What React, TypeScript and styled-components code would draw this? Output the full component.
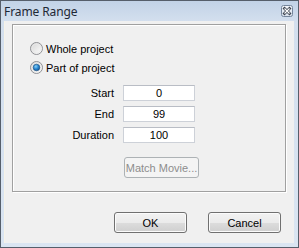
import React from 'react';
import styled, { createGlobalStyle } from 'styled-components';

const Global = createGlobalStyle`
  html, body { margin: 0; padding: 0; background: #ffffff; }
  body { font-family: "Liberation Sans", Arial, sans-serif; font-size: 11px; }
`;

const Window = styled.div`
  width: 299px;
  height: 248px;
  box-sizing: border-box;
  border: 1px solid #565f6b;
  background: linear-gradient(#c2d3e7 0px, #d3dfee 20px, #dae5f2 100%);
  display: flex;
  flex-direction: column;
`;

const TitleBar = styled.div`
  height: 20px;
  flex: none;
  display: flex;
  align-items: center;
  justify-content: space-between;
  padding: 0 5px 0 3px;
`;

const Title = styled.span`
  font-family: "Noto Sans", "Liberation Sans", sans-serif;
  font-size: 12px;
  color: #1e2835;
  letter-spacing: -0.1px;
`;

const Frame = styled.div`
  flex: 1;
  display: flex;
  padding: 0 4px 4px 4px;
`;

const Client = styled.div`
  flex: 1;
  background: #f0f0f0;
  display: flex;
  flex-direction: column;
  padding: 3px 0 10px 0;
  box-shadow: -1px 0 0 #f6f3e8;
`;

const GroupBox = styled.div`
  box-sizing: border-box;
  height: 168px;
  margin: 0 8px 0 7px;
  border: 1px solid #a0a0a0;
  box-shadow: inset 1px 1px 0 #ffffff, 1px 1px 0 #ffffff;
  padding: 17px 0 0 17px;
  display: flex;
  flex-direction: column;
`;

const RadioList = styled.div`
  display: flex;
  flex-direction: column;
  gap: 6px;
`;

const RadioRow = styled.label`
  display: flex;
  align-items: center;
  gap: 3px;
  height: 13px;
  color: #000;
  font-size: 11px;
`;

const Fields = styled.div`
  display: grid;
  grid-template-columns: 84px 72px;
  grid-auto-rows: 16px;
  column-gap: 9px;
  row-gap: 5px;
  margin-top: 11px;
  align-items: center;
`;

const FieldLabel = styled.span`
  text-align: right;
  color: #000;
  font-size: 11px;
`;

const FieldBox = styled.div`
  box-sizing: border-box;
  height: 16px;
  border: 1px solid #cdd1d8;
  border-top-color: #b9bdc5;
  background: #ffffff;
  display: flex;
  align-items: center;
  justify-content: center;
  font-size: 11px;
  color: #000;
`;

const PushButton = styled.div<{ $disabled?: boolean; $w: number }>`
  box-sizing: border-box;
  width: ${(p) => p.$w}px;
  height: 21px;
  border: 1px solid ${(p) => (p.$disabled ? '#adb2b5' : '#707070')};
  border-radius: 3px;
  background: ${(p) =>
    p.$disabled
      ? '#f4f4f4'
      : 'linear-gradient(#f2f2f2 0%, #ebebeb 50%, #dddddd 50%, #cfcfcf 100%)'};
  box-shadow: inset 0 0 0 1px ${(p) => (p.$disabled ? '#f4f4f4' : '#fbfbfb')};
  color: ${(p) => (p.$disabled ? '#8d8d8d' : '#000')};
  display: flex;
  align-items: center;
  justify-content: center;
  font-size: 11px;
`;

const MatchCell = styled.div`
  grid-column: 2;
  margin-top: 9px;
  margin-left: 1px;
  align-self: start;
`;

const ButtonRow = styled.div`
  margin-top: auto;
  display: flex;
  justify-content: flex-end;
  gap: 21px;
  padding-right: 13px;
`;

const CloseIcon = () => (
  <svg width="12" height="12" viewBox="0 0 12 12">
    <defs>
      <linearGradient id="cg" x1="0" y1="0" x2="0" y2="1">
        <stop offset="0" stopColor="#f4f7fb" />
        <stop offset="1" stopColor="#d6dfea" />
      </linearGradient>
    </defs>
    <rect x="0.5" y="0.5" width="11" height="11" rx="2" fill="url(#cg)" stroke="#75869c" />
    <path d="M3.5 3.5 L8.5 8.5 M8.5 3.5 L3.5 8.5" stroke="#3d4450" strokeWidth="2.8" strokeLinecap="square" />
    <path d="M3.5 3.5 L8.5 8.5 M8.5 3.5 L3.5 8.5" stroke="#ffffff" strokeWidth="1.1" />
  </svg>
);

const RadioIcon = ({ checked }: { checked?: boolean }) => (
  <svg width="13" height="13" viewBox="0 0 13 13">
    <defs>
      <linearGradient id="rf" x1="0" y1="0" x2="1" y2="1">
        <stop offset="0" stopColor="#d4d4d4" />
        <stop offset="1" stopColor="#ffffff" />
      </linearGradient>
      <radialGradient id="rd" cx="0.4" cy="0.35" r="0.7">
        <stop offset="0" stopColor="#8ad0f5" />
        <stop offset="0.5" stopColor="#2a8ad4" />
        <stop offset="1" stopColor="#0f4f8c" />
      </radialGradient>
    </defs>
    <circle cx="6.5" cy="6.5" r="6" fill="url(#rf)" stroke="#8f9094" />
    <circle cx="6.5" cy="6.5" r="4.6" fill="none" stroke="#e8e8e8" strokeWidth="0.8" />
    {checked && <circle cx="6.5" cy="6.5" r="3.3" fill="url(#rd)" stroke="#1b4f80" strokeWidth="0.6" />}
  </svg>
);

export default function App() {
  return (
    <>
      <Global />
      <Window>
        <TitleBar>
          <Title>Frame Range</Title>
          <CloseIcon />
        </TitleBar>
        <Frame>
          <Client>
            <GroupBox>
              <RadioList>
                <RadioRow>
                  <RadioIcon />
                  Whole project
                </RadioRow>
                <RadioRow>
                  <RadioIcon checked />
                  Part of project
                </RadioRow>
              </RadioList>
              <Fields>
                <FieldLabel>Start</FieldLabel>
                <FieldBox>0</FieldBox>
                <FieldLabel>End</FieldLabel>
                <FieldBox>99</FieldBox>
                <FieldLabel>Duration</FieldLabel>
                <FieldBox>100</FieldBox>
                <MatchCell>
                  <PushButton $disabled $w={75}>Match Movie...</PushButton>
                </MatchCell>
              </Fields>
            </GroupBox>
            <ButtonRow>
              <PushButton $w={73}>OK</PushButton>
              <PushButton $w={73}>Cancel</PushButton>
            </ButtonRow>
          </Client>
        </Frame>
      </Window>
    </>
  );
}
